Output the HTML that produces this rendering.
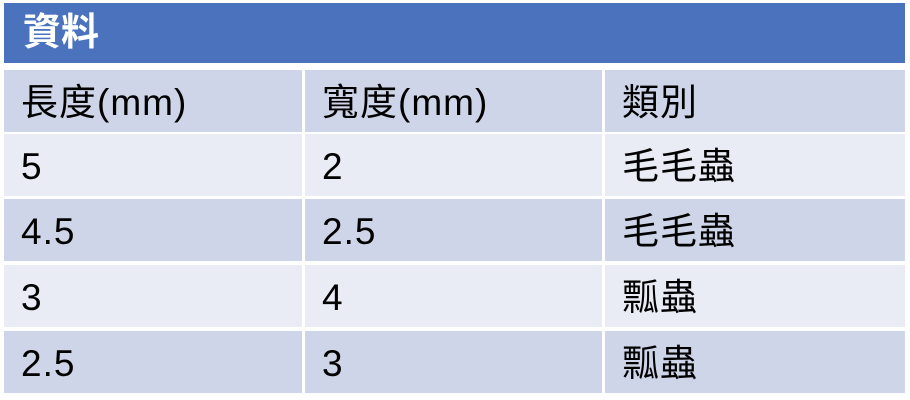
<!DOCTYPE html>
<html><head><meta charset="utf-8"><style>
body{margin:0;width:910px;height:400px;background:#fff;position:relative;overflow:hidden;font-family:"Liberation Sans","Noto Sans CJK TC",sans-serif;}
.h{position:absolute;left:4px;top:3px;width:901px;height:60px;background:#4a72bd;color:#fff;font-weight:bold;font-size:38px;line-height:60px;padding-left:19px;box-sizing:border-box;}
.c{position:absolute;height:62px;line-height:66px;font-size:37px;color:#000;padding-left:17px;box-sizing:border-box;letter-spacing:1px;}
.d{background:#cfd5e8}.l{background:#e9ebf5}
</style></head><body>
<div class="h">資料</div>
<div class="c d" style="left:4px;top:70px;width:298px">長度(mm)</div>
<div class="c d" style="left:305px;top:70px;width:297px">寬度(mm)</div>
<div class="c d" style="left:605px;top:70px;width:300px">類別</div>
<div class="c l" style="left:4px;top:134px;width:298px">5</div>
<div class="c l" style="left:305px;top:134px;width:297px">2</div>
<div class="c l" style="left:605px;top:134px;width:300px">毛毛蟲</div>
<div class="c d" style="left:4px;top:199px;width:298px">4.5</div>
<div class="c d" style="left:305px;top:199px;width:297px">2.5</div>
<div class="c d" style="left:605px;top:199px;width:300px">毛毛蟲</div>
<div class="c l" style="left:4px;top:265px;width:298px">3</div>
<div class="c l" style="left:305px;top:265px;width:297px">4</div>
<div class="c l" style="left:605px;top:265px;width:300px">瓢蟲</div>
<div class="c d" style="left:4px;top:331px;width:298px">2.5</div>
<div class="c d" style="left:305px;top:331px;width:297px">3</div>
<div class="c d" style="left:605px;top:331px;width:300px">瓢蟲</div>
</body></html>
